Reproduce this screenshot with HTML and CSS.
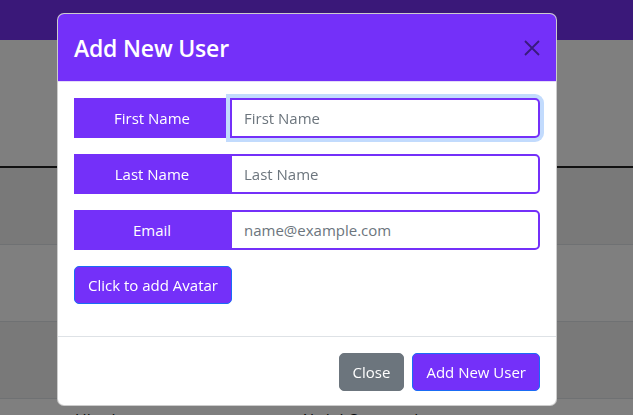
FILE: index.html
```html
<!DOCTYPE html>
<html lang="en">
<head>
<meta charset="utf-8">
<title>Users</title>
<link rel="stylesheet" href="styles.css">
</head>
<body>
<div class="page">
  <nav class="navbar"></nav>
  <section class="hero"></section>
  <div class="table">
    <div class="trow striped"></div>
    <div class="trow"></div>
    <div class="trow striped"></div>
    <div class="trow last"><span class="cell c1">Ukasha</span><span class="cell c2">Abdul Oommed</span></div>
  </div>
</div>

<div class="backdrop"></div>

<div class="modal-dialog">
  <div class="modal-content">
    <div class="modal-header">
      <h5 class="modal-title">Add New User</h5>
      <button class="btn-close" aria-label="Close">
        <svg viewBox="0 0 16 16" width="16" height="16"><path d="M1 1 L15 15 M15 1 L1 15" stroke="currentColor" stroke-width="1.8" fill="none"/></svg>
      </button>
    </div>
    <div class="modal-body">
      <div class="input-group">
        <span class="input-label">First Name</span>
        <input class="form-input focused" type="text" placeholder="First Name">
      </div>
      <div class="input-group">
        <span class="input-label">Last Name</span>
        <input class="form-input" type="text" placeholder="Last Name">
      </div>
      <div class="input-group">
        <span class="input-label">Email</span>
        <input class="form-input" type="email" placeholder="name@example.com">
      </div>
      <button class="btn btn-purple avatar">Click to add Avatar</button>
    </div>
    <div class="modal-footer">
      <button class="btn btn-gray">Close</button>
      <button class="btn btn-purple">Add New User</button>
    </div>
  </div>
</div>
</body>
</html>
```
FILE: styles.css
```css
* { box-sizing: border-box; }
html, body { margin: 0; padding: 0; }
body {
  font-family: "Open Sans", "Noto Sans", sans-serif;
  font-size: 15px;
  background: #fff;
  color: #212529;
  width: 633px;
  height: 415px;
  overflow: hidden;
}
.page { display: flex; flex-direction: column; }
.navbar { height: 40px; background: #7430f2; flex: none; }
.hero { height: 128px; background: #fff; border-bottom: 2px solid #222; flex: none; }
.table { display: flex; flex-direction: column; }
.trow { height: 77px; border-bottom: 1px solid #dee2e6; background: #fff; flex: none; }
.trow.striped { background: #f2f2f2; }
.trow.last { position: relative; height: 40px; border-bottom: none; }
.cell { position: absolute; top: 9px; font-size: 16px; line-height: 24px; color: #111; }
.c1 { left: 75px; }
.c2 { left: 300px; }

.backdrop {
  position: fixed;
  inset: 0;
  background: rgba(0, 0, 0, 0.5);
}

.modal-dialog {
  position: fixed;
  top: 13px;
  left: 57px;
  width: 500px;
}
.modal-content {
  background: #fff;
  border: 1px solid rgba(0, 0, 0, 0.2);
  border-radius: 7px;
  overflow: hidden;
  display: flex;
  flex-direction: column;
}
.modal-header {
  background: #7430f9;
  height: 68px;
  padding: 0 16px;
  display: flex;
  align-items: center;
  justify-content: space-between;
  border-bottom: 1px solid #e4dcf8;
}
.modal-title {
  margin: 0;
  font-size: 23px;
  font-weight: 600;
  color: #fff;
  letter-spacing: -0.2px;
  line-height: 36px;
}
.btn-close {
  background: none;
  border: none;
  padding: 0;
  width: 16px;
  height: 16px;
  color: #391a7d;
  display: flex;
}
.modal-body { padding: 16px; display: flex; flex-direction: column; align-items: flex-start; }
.input-group { display: flex; height: 40px; margin-bottom: 16px; width: 100%; }
.input-label {
  width: 156px;
  flex: none;
  background: #7430f9;
  color: #fff;
  display: flex;
  align-items: center;
  justify-content: center;
}
.form-input {
  flex: 1;
  min-width: 0;
  border: 2px solid #7430f9;
  border-radius: 0 5px 5px 0;
  padding: 0 12px;
  font-family: inherit;
  font-size: 15px;
  color: #212529;
  background: #fff;
  outline: none;
}
.form-input::placeholder { color: #6c757d; }
.form-input.focused { box-shadow: 0 0 0 4px #c2dbfd; position: relative; }

.btn {
  font-family: inherit;
  font-size: 15px;
  line-height: 24px;
  padding: 6px 13px;
  border-radius: 5px;
  color: #fff;
  cursor: pointer;
}
.btn-purple { background: #7430f9; border: 1px solid #1a6cf5; }
.btn-gray { background: #6c757d; border: 1px solid #6c757d; }
.avatar { margin-bottom: 16px; }

.modal-footer {
  border-top: 1px solid #dee2e6;
  padding: 16px 16px 14px;
  display: flex;
  justify-content: flex-end;
  gap: 8px;
}
```
